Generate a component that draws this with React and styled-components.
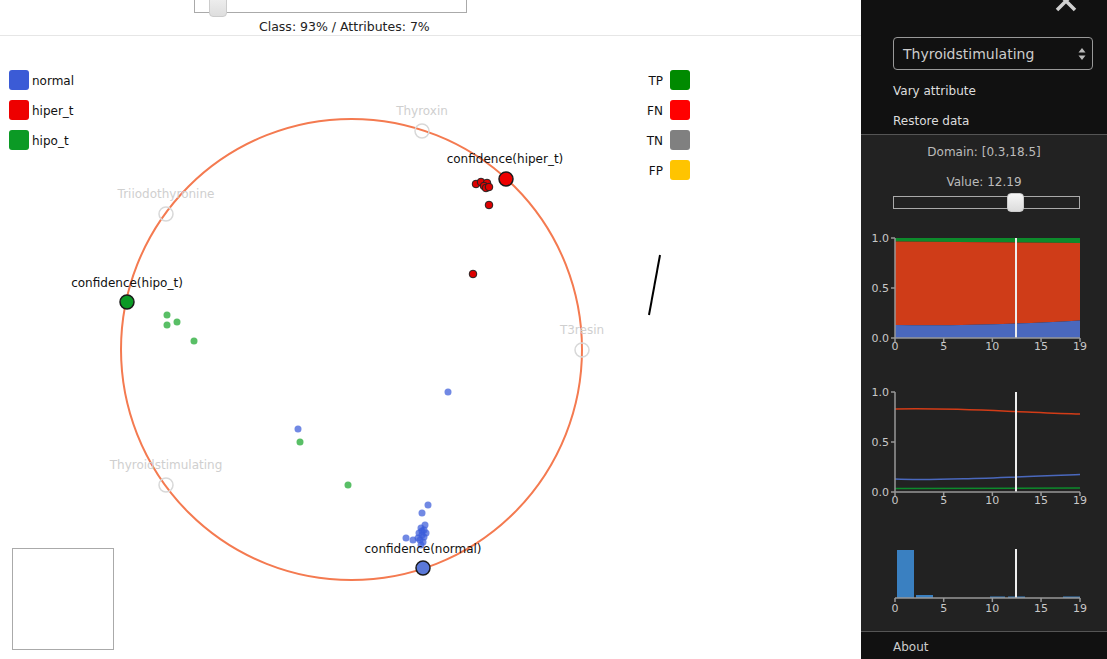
import React from 'react'
import styled, {createGlobalStyle} from 'styled-components'

const GlobalStyle = createGlobalStyle`
    html, body {
        margin: 0;
        padding: 0;
        background: #fff;
        font-family: "DejaVu Sans", Verdana, sans-serif;
        overflow: hidden;
    }
`

const classLegend = [
    {label: 'normal', color: '#3b5bd6'},
    {label: 'hiper_t', color: '#ee0000'},
    {label: 'hipo_t', color: '#0b9a25'},
]

const outcomeLegend = [
    {label: 'TP', color: '#008a00'},
    {label: 'FN', color: '#ff0000'},
    {label: 'TN', color: '#808080'},
    {label: 'FP', color: '#ffc400'},
]

const anchors = [
    {label: 'Thyroxin', x: 422, y: 131},
    {label: 'Triiodothyronine', x: 166, y: 214},
    {label: 'T3resin', x: 582, y: 350},
    {label: 'Thyroidstimulating', x: 166, y: 485},
]

const confidences = [
    {label: 'confidence(hiper_t)', x: 506, y: 179, lx: 505, ly: 163, color: '#ee0000'},
    {label: 'confidence(hipo_t)', x: 127, y: 302, lx: 127, ly: 287, color: '#0b9a25'},
    {label: 'confidence(normal)', x: 423, y: 568, lx: 423, ly: 553, color: '#5a78d8'},
]

const redPoints = [[476, 184], [481, 182], [487, 183], [484, 186], [486, 188], [489, 187], [489, 205], [473, 274]]
const greenPoints = [[167, 315], [177, 322], [167, 325], [194, 341], [300, 442], [348, 485]]
const bluePoints = [
    [448, 392], [298, 429], [428, 505], [422, 513], [425, 525], [421, 528], [419, 533],
    [422, 535], [424, 537], [420, 540], [423, 542], [418, 538], [426, 533], [406, 538],
    [413, 540], [421, 545], [424, 530], [422, 531],
]

const xTicks = [0, 5, 10, 15, 19]
const xPos = (v) => 34 + (v / 19) * 185
const markerX = 155

const Axes = ({top, bottom, yLabels, labelOffset = 12}) => (
    <g>
        {yLabels && (
            <>
                <line x1={34} y1={top} x2={34} y2={bottom} stroke="#999" strokeWidth="1.5" />
                {[1, 0.5, 0].map((p) => {
                    const y = bottom - p * (bottom - top)
                    return (
                        <g key={p}>
                            <line x1={30} y1={y} x2={34} y2={y} stroke="#999" strokeWidth="1.5" />
                            <AxisText x={28} y={y + 4} textAnchor="end">{p.toFixed(1)}</AxisText>
                        </g>
                    )
                })}
            </>
        )}
        <line x1={34} y1={bottom} x2={219} y2={bottom} stroke="#999" strokeWidth="1.5" />
        {xTicks.map((t) => (
            <g key={t}>
                <line x1={xPos(t)} y1={bottom} x2={xPos(t)} y2={bottom + 4} stroke="#999" strokeWidth="1.5" />
                <AxisText x={xPos(t)} y={bottom + labelOffset} textAnchor="middle">{t}</AxisText>
            </g>
        ))}
    </g>
)

const App = () => {
    return (
        <Page>
            <GlobalStyle />
            <Main>
                <TopBar>
                    <Track>
                        <Thumb />
                    </Track>
                    <Caption>Class: 93% / Attributes: 7%</Caption>
                </TopBar>
                <Plot viewBox="0 36 861 623" width="861" height="623">
                    {classLegend.map((item, i) => (
                        <g key={item.label}>
                            <rect x={9} y={70 + i * 30} width={20} height={20} rx={3} fill={item.color} />
                            <LegendText x={32} y={85 + i * 30}>{item.label}</LegendText>
                        </g>
                    ))}
                    {outcomeLegend.map((item, i) => (
                        <g key={item.label}>
                            <rect x={670} y={70 + i * 30} width={20} height={20} rx={3} fill={item.color} />
                            <LegendText x={663} y={85 + i * 30} textAnchor="end">{item.label}</LegendText>
                        </g>
                    ))}

                    <circle cx={351.5} cy={349.5} r={230.5} fill="none" stroke="#f47a50" strokeWidth="2" />

                    {anchors.map((a) => (
                        <g key={a.label}>
                            <circle cx={a.x} cy={a.y} r={7} fill="none" stroke="#d8d8d8" strokeWidth="1.5" />
                            <AnchorText x={a.x} y={a.y - 16} textAnchor="middle">{a.label}</AnchorText>
                        </g>
                    ))}

                    {greenPoints.map(([x, y], i) => (
                        <circle key={'g' + i} cx={x} cy={y} r={3.5} fill="#22aa33" fillOpacity="0.75" />
                    ))}
                    {bluePoints.map(([x, y], i) => (
                        <circle key={'b' + i} cx={x} cy={y} r={3.5} fill="#3a5bd9" fillOpacity="0.72" />
                    ))}
                    {redPoints.map(([x, y], i) => (
                        <circle key={'r' + i} cx={x} cy={y} r={3.8} fill="#dd0000" stroke="#222" strokeWidth="1" />
                    ))}

                    {confidences.map((c) => (
                        <g key={c.label}>
                            <circle cx={c.x} cy={c.y} r={7} fill={c.color} stroke="#1a1a1a" strokeWidth="1.5" />
                            <LegendText x={c.lx} y={c.ly} textAnchor="middle">{c.label}</LegendText>
                        </g>
                    ))}

                    <line x1={660} y1={255} x2={649} y2={315} stroke="#000" strokeWidth="2" />

                    <rect x={12.5} y={548.5} width={101} height={101} fill="#fff" stroke="#aaa" strokeWidth="1" />
                </Plot>
            </Main>

            <Sidebar>
                <TopPanel>
                    <CloseRow>
                        <CloseIcon width="24" height="24" viewBox="0 0 24 24">
                            <path d="M3 3 L21 21 M21 3 L3 21" stroke="#d0d0d0" strokeWidth="3.5" strokeLinecap="butt" />
                        </CloseIcon>
                    </CloseRow>
                    <Select>
                        <span>Thyroidstimulating</span>
                        <svg width="8" height="14" viewBox="0 0 8 14">
                            <path d="M4 1 L7.5 5.5 L0.5 5.5 Z M4 13 L7.5 8.5 L0.5 8.5 Z" fill="#bbb" />
                        </svg>
                    </Select>
                    <Menu>
                        <MenuItem>Vary attribute</MenuItem>
                        <MenuItem>Restore data</MenuItem>
                    </Menu>
                </TopPanel>

                <Info>
                    <InfoLine>Domain: [0.3,18.5]</InfoLine>
                    <InfoLine>Value: 12.19</InfoLine>
                </Info>
                <RangeTrack>
                    <RangeThumb />
                </RangeTrack>

                <Chart width="246" height="130" $top={19}>
                    <path d="M34,13.5 L219,15 L219,10 L34,10 Z" fill="#0d8a2c" />
                    <path d="M34,97 C90,98 150,96.5 219,92.5 L219,15 L34,13.5 Z" fill="#cf3c18" />
                    <path d="M34,110 L34,97 C90,98 150,96.5 219,92.5 L219,110 Z" fill="#4a68bd" />
                    <line x1={markerX} y1={10} x2={markerX} y2={110} stroke="#eee" strokeWidth="2" />
                    <Axes top={10} bottom={110} yLabels />
                </Chart>

                <Chart width="246" height="130" $top={24}>
                    <path d="M34,27 C80,26 120,28 155,29.5 S200,31.5 219,32" fill="none" stroke="#d33c17" strokeWidth="1.5" />
                    <path d="M34,97 C70,98.5 130,96 219,92.5" fill="none" stroke="#4a68bd" strokeWidth="1.5" />
                    <path d="M34,106.5 L219,106" fill="none" stroke="#0d8a2c" strokeWidth="1.5" />
                    <line x1={markerX} y1={10} x2={markerX} y2={110} stroke="#eee" strokeWidth="2" />
                    <Axes top={10} bottom={110} yLabels />
                </Chart>

                <Chart width="246" height="80" $top={27}>
                    <rect x={36} y={11} width={17} height={48} fill="#3a80c1" />
                    <rect x={55} y={56} width={17} height={3} fill="#3a80c1" />
                    <rect x={129} y={57.5} width={15} height={1.5} fill="#3a80c1" />
                    <rect x={147} y={57.5} width={17} height={1.5} fill="#3a80c1" />
                    <rect x={202} y={57.5} width={17} height={1.5} fill="#3a80c1" />
                    <line x1={markerX} y1={10} x2={markerX} y2={59} stroke="#eee" strokeWidth="2" />
                    <Axes top={10} bottom={59} labelOffset={14} />
                </Chart>

                <Footer>About</Footer>
            </Sidebar>
        </Page>
    )
}

export default App

const Page = styled.div`
    display: flex;
    width: 1107px;
    height: 659px;
    overflow: hidden;
`

const Main = styled.div`
    flex: 1;
    display: flex;
    flex-direction: column;
    background: #fff;
`

const TopBar = styled.div`
    height: 35px;
    border-bottom: 1px solid #e6e6e6;
    padding-left: 194px;
`

const Track = styled.div`
    position: relative;
    width: 271px;
    height: 19px;
    margin-top: -8px;
    border: 1px solid #aaa;
    background: #fff;
`

const Thumb = styled.div`
    position: absolute;
    left: 14px;
    top: -4px;
    width: 16px;
    height: 26px;
    border: 1px solid #ccc;
    border-radius: 4px;
    background: linear-gradient(#f6f6f6, #dedede);
`

const Caption = styled.div`
    margin: 7px 0 0 65px;
    font-size: 12.5px;
    line-height: 14px;
    color: #222;
`

const Plot = styled.svg`
    display: block;
    font-family: "DejaVu Sans", Verdana, sans-serif;
`

const LegendText = styled.text`
    font-size: 12px;
    fill: #111;
`

const AnchorText = styled.text`
    font-size: 12px;
    fill: #cfcfcf;
`

const AxisText = styled.text`
    font-size: 11px;
    fill: #c8c8c8;
    font-family: "DejaVu Sans", Verdana, sans-serif;
`

const Sidebar = styled.div`
    width: 246px;
    display: flex;
    flex-direction: column;
    background: #222;
    color: #ccc;
    font-size: 12px;
`

const TopPanel = styled.div`
    height: 135px;
    box-sizing: border-box;
    background: #111;
    border-bottom: 1px solid #555;
    padding: 0 14px 0 32px;
    display: flex;
    flex-direction: column;
`

const CloseRow = styled.div`
    height: 37px;
    flex-shrink: 0;
    display: flex;
    justify-content: flex-end;
    padding-right: 15px;
`

const CloseIcon = styled.svg`
    margin-top: -11px;
`

const Select = styled.div`
    height: 33px;
    flex-shrink: 0;
    box-sizing: border-box;
    border: 1px solid #999;
    border-radius: 4px;
    padding: 0 6px 0 9px;
    display: flex;
    align-items: center;
    justify-content: space-between;
    font-size: 14px;
    color: #ccc;
`

const Menu = styled.div`
    margin-top: 6px;
`

const MenuItem = styled.div`
    height: 30px;
    line-height: 30px;
    color: #ddd;
`

const Info = styled.div`
    padding-top: 2px;
`

const InfoLine = styled.div`
    height: 30px;
    line-height: 30px;
    text-align: center;
    color: #bbb;
`

const RangeTrack = styled.div`
    position: relative;
    margin: -1px 0 0 32px;
    width: 185px;
    height: 11px;
    border: 1px solid #aaa;
    background: #222;
`

const RangeThumb = styled.div`
    position: absolute;
    left: 113px;
    top: -4px;
    width: 15px;
    height: 17px;
    border: 1px solid #ccc;
    border-radius: 4px;
    background: linear-gradient(#f6f6f6, #dcdcdc);
`

const Chart = styled.svg`
    display: block;
    margin-top: ${(p) => p.$top}px;
`

const Footer = styled.div`
    margin-top: auto;
    height: 27px;
    line-height: 30px;
    border-top: 1px solid #555;
    background: #111;
    padding-left: 32px;
    color: #ccc;
`
